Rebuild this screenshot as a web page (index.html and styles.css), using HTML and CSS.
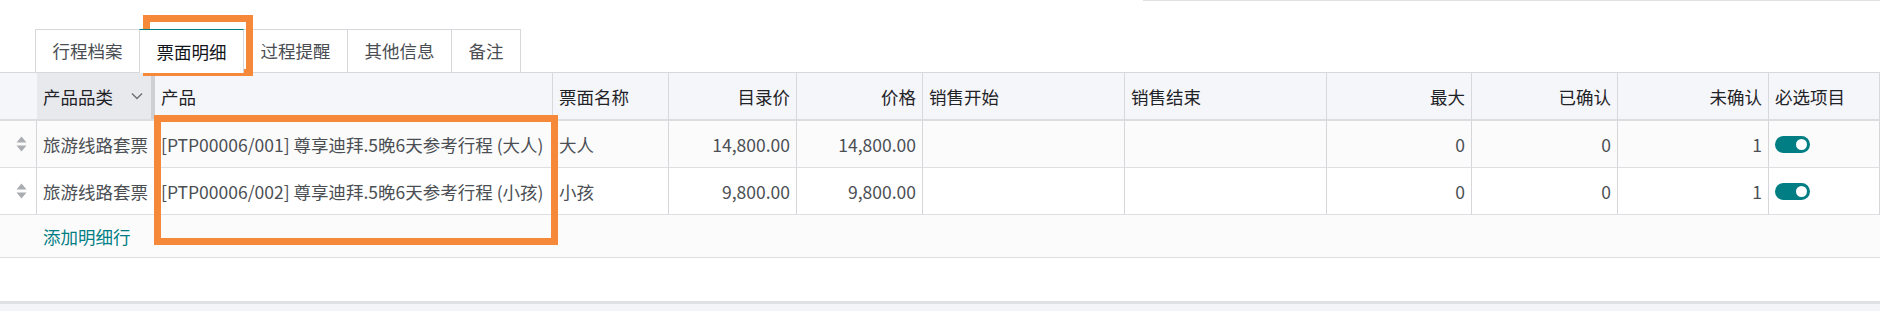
FILE: index.html
```html
<!DOCTYPE html>
<html lang="zh-CN">
<head>
<meta charset="utf-8">
<title>票面明细</title>
<link rel="stylesheet" href="styles.css">
</head>
<body>
<div class="page">
  <div class="topline"></div>
  <ul class="tabs">
    <li class="tab">行程档案</li>
    <li class="tab active">票面明细</li>
    <li class="tab">过程提醒</li>
    <li class="tab">其他信息</li>
    <li class="tab">备注</li>
  </ul>
  <table class="grid">
    <colgroup>
      <col class="c-handle"><col class="c-cat"><col class="c-prod"><col class="c-name">
      <col class="c-list"><col class="c-price"><col class="c-start"><col class="c-end">
      <col class="c-max"><col class="c-conf"><col class="c-unconf"><col class="c-req">
    </colgroup>
    <thead>
      <tr>
        <th class="handle"></th>
        <th class="sorted"><span class="th-inner">产品品类<svg class="chev" width="12" height="8" viewBox="0 0 12 8"><path d="M1 1.5 L6 6.5 L11 1.5" fill="none" stroke="#6c6f73" stroke-width="1.4"/></svg></span></th>
        <th>产品</th>
        <th>票面名称</th>
        <th class="num">目录价</th>
        <th class="num">价格</th>
        <th>销售开始</th>
        <th>销售结束</th>
        <th class="num">最大</th>
        <th class="num">已确认</th>
        <th class="num">未确认</th>
        <th>必选项目</th>
      </tr>
    </thead>
    <tbody>
      <tr class="odd">
        <td class="handle"><svg class="sort" width="11" height="16" viewBox="0 0 11 16"><path d="M5.5 0.5 L10.5 6.5 L0.5 6.5 Z M0.5 9.5 L10.5 9.5 L5.5 15.5 Z" fill="#a9acb0"/></svg></td>
        <td>旅游线路套票</td>
        <td>[PTP00006/001] 尊享迪拜.5晚6天参考行程 (大人)</td>
        <td>大人</td>
        <td class="num">14,800.00</td>
        <td class="num">14,800.00</td>
        <td></td>
        <td></td>
        <td class="num">0</td>
        <td class="num">0</td>
        <td class="num">1</td>
        <td><span class="toggle"><span class="knob"></span></span></td>
      </tr>
      <tr>
        <td class="handle"><svg class="sort" width="11" height="16" viewBox="0 0 11 16"><path d="M5.5 0.5 L10.5 6.5 L0.5 6.5 Z M0.5 9.5 L10.5 9.5 L5.5 15.5 Z" fill="#a9acb0"/></svg></td>
        <td>旅游线路套票</td>
        <td>[PTP00006/002] 尊享迪拜.5晚6天参考行程 (小孩)</td>
        <td>小孩</td>
        <td class="num">9,800.00</td>
        <td class="num">9,800.00</td>
        <td></td>
        <td></td>
        <td class="num">0</td>
        <td class="num">0</td>
        <td class="num">1</td>
        <td><span class="toggle"><span class="knob"></span></span></td>
      </tr>
      <tr class="add">
        <td></td>
        <td colspan="11"><a class="add-link">添加明细行</a></td>
      </tr>
    </tbody>
  </table>
  <div class="spacer"></div>
  <div class="footer"></div>

  <div class="mark mark-tab"></div>
  <div class="mark mark-product"></div>
</div>
</body>
</html>
```

FILE: styles.css
```css
* { box-sizing: border-box; }
html, body { margin: 0; padding: 0; background: #ffffff; }
body {
  font-family: "Noto Sans CJK SC", "Noto Sans", sans-serif;
  font-size: 17.5px;
  color: #4b4f54;
  width: 1880px;
  height: 311px;
  overflow: hidden;
}
.page { position: relative; width: 1880px; height: 311px; }

.topline {
  height: 1px;
  margin-left: 1143px;
  background: #dfe1e5;
}

.tabs {
  list-style: none;
  margin: 28px 0 0 0;
  padding: 0 0 0 35px;
  display: flex;
  height: 43px;
}
.tab {
  height: 43px;
  padding: 0 16.5px;
  border: 1px solid #d6d8dc;
  border-bottom: none;
  margin-left: -1px;
  display: flex;
  align-items: center;
  color: #4a4e53;
  background: #fff;
  line-height: 1;
}
.tab:first-child { margin-left: 0; }
.tab.active {
  color: #111418;
  border-top: 1px solid #017e84;
  height: 44px;
  position: relative;
  z-index: 2;
}

.grid {
  width: 1880px;
  table-layout: fixed;
  border-collapse: separate;
  border-spacing: 0;
}
.c-handle { width: 37px; }
.c-cat { width: 118px; }
.c-prod { width: 398px; }
.c-name { width: 116px; }
.c-list { width: 128px; }
.c-price { width: 126px; }
.c-start { width: 202px; }
.c-end { width: 202px; }
.c-max { width: 145px; }
.c-conf { width: 146px; }
.c-unconf { width: 151px; }
.c-req { width: 111px; }

.grid th {
  height: 49px;
  padding: 0 6px;
  background: #f5f6f9;
  border-top: 1px solid #d6d8dc;
  border-bottom: 2px solid #dcdde1;
  border-right: 1px solid #d6d8dc;
  font-weight: normal;
  color: #1f2328;
  text-align: left;
  white-space: nowrap;
  overflow: hidden;
}
.grid th.handle { border-right: none; }
.grid th.sorted {
  background: #e8e9ed;
  border-right: none;
  box-shadow: inset -4px 0 0 #cfd0d4;
}
.th-inner {
  display: flex;
  align-items: center;
  justify-content: space-between;
  padding-right: 6px;
}
.chev { display: block; }

.grid td {
  height: 47px;
  padding: 0 6px;
  border-bottom: 1px solid #dedfe2;
  border-right: 1px solid #d4d6da;
  white-space: nowrap;
  overflow: hidden;
  vertical-align: middle;
  background: #ffffff;
}
.grid tr.odd td { background: #fbfbfb; }
.grid td.handle { padding: 0 0 0 16px; }
.grid .num { text-align: right; }
.grid th.num { text-align: right; }

.sort { display: block; }

.grid tr.add td {
  height: 43px;
  border-right: none;
  background: #fbfbfb;
}
.add-link { color: #017e84; text-decoration: none; }

.toggle {
  display: block;
  width: 35px;
  height: 17px;
  border-radius: 9px;
  background: #017e84;
  position: relative;
}
.knob {
  position: absolute;
  right: 3px;
  top: 3px;
  width: 11px;
  height: 11px;
  border-radius: 50%;
  background: #ffffff;
}

.spacer { height: 43px; background: #ffffff; }
.footer {
  height: 20px;
  border-top: 3px solid #e0e1e5;
  background: #f4f5f8;
}

.mark {
  position: absolute;
  border: 7px solid #f6883a;
  pointer-events: none;
}
.mark-tab { left: 143px; top: 15px; width: 110px; height: 61px; }
.mark-product { left: 154px; top: 115px; width: 404px; height: 130px; }
```
